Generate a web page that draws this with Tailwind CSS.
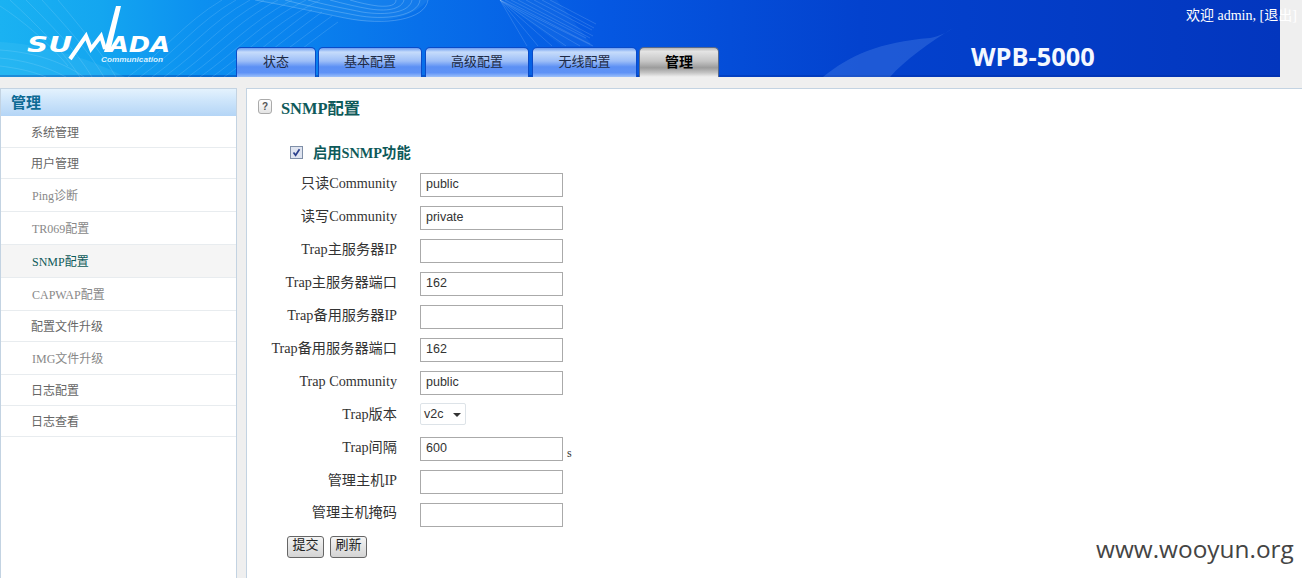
<!DOCTYPE html>
<html lang="zh">
<head>
<meta charset="utf-8">
<title>SNMP配置</title>
<script src="https://cdn.jsdelivr.net/npm/@tailwindcss/browser@4"></script>
</head>
<body class="m-0 bg-[#efefef] font-['Liberation_Serif','Noto_Sans_CJK_SC',serif] text-[14px] text-[#333]">
<div class="relative h-[578px] w-[1302px] overflow-hidden">

  <header class="relative h-[77px] w-[1280px] bg-[linear-gradient(90deg,#1ab2f2_0px,#14a6f0_100px,#0c90f0_200px,#0a82ee_300px,#0870ea_420px,#0558e2_600px,#0342ce_860px,#0336be_1280px)]">
    <svg class="absolute inset-0" width="1280" height="77" viewBox="0 0 1280 77" fill="none">
      <rect x="0" y="75" width="1280" height="2" fill="#022a9a" fill-opacity=".35"/>
      <path d="M255 0C295 6 320 12 345 18C370 24 410 22 428 0Z" fill="#6cc4fa" fill-opacity=".12"/>
      <path d="M823 77C850 55 880 42 930 38C940 36 948 32 953 28C930 42 905 60 890 77Z" fill="#6b9ef0" fill-opacity=".26"/>
      <path d="M0 42C40 44 90 58 125 77L0 77Z" fill="#6ed2fa" fill-opacity=".14"/>
      <path d="M500 0H557L593 46H562Z" fill="#7cc0fa" fill-opacity=".07"/>
      <g stroke="#bfe6ff" stroke-opacity=".17" stroke-width="1">
        <path d="M128 77C165 50 185 22 222 0"/><path d="M140 77C178 50 197 22 236 0"/><path d="M152 77C190 50 210 22 250 0"/>
        <path d="M164 77C202 50 223 22 264 0"/><path d="M176 77C214 50 236 22 278 0"/><path d="M188 77C226 50 250 22 292 0"/>
        <path d="M200 77C238 50 262 22 306 0"/><path d="M212 77C250 50 276 22 320 0"/><path d="M224 77C262 50 290 24 312 10"/>
        <path d="M236 77C272 50 300 28 322 12"/><path d="M250 77C284 52 312 30 332 16"/><path d="M264 77C296 54 318 36 338 22"/>
        <path d="M116 77C100 50 78 24 58 0"/><path d="M104 77C88 50 64 24 42 0"/><path d="M92 77C76 50 50 24 26 0"/>
        <path d="M80 77C64 52 38 26 10 0"/><path d="M68 66C50 44 22 20 0 6"/>
        <path d="M0 50C30 52 60 60 84 77"/><path d="M0 58C22 60 46 66 66 77"/><path d="M0 66C16 68 32 71 46 77"/>
      </g>
      <g stroke="#cfeaff" stroke-opacity=".17">
        <path d="M500 0L593 46"/><path d="M505 0L590 44"/><path d="M511 0L586 38"/><path d="M518 0L590 38"/><path d="M526 0L593 36"/>
        <path d="M534 0L592 30"/><path d="M542 0L594 28"/><path d="M550 0L596 24"/><path d="M500 0L527 46"/><path d="M500 0L538 46"/><path d="M500 0L552 46"/><path d="M500 0L566 46"/><path d="M500 0L580 46"/>
      </g>
      <g stroke="#cfeaff" stroke-opacity=".26">
        <path d="M255 0C300 8 325 14 345 18C385 26 425 20 428 0"/><path d="M285 0C315 8 340 12 355 15C385 21 418 16 420 0"/>
        <path d="M308 0C330 6 348 9 362 12C388 16 410 12 412 0"/><path d="M330 0C345 4 358 7 370 9C390 12 402 8 404 0"/>
        <path d="M350 0C360 3 370 5 378 6C390 7 396 5 396 0"/>
      </g>
    </svg>

    <svg class="absolute left-0 top-0" width="200" height="77" viewBox="0 0 200 77" fill="none">
      <path d="M70 59L86 36L91 49L101 36L105 49" stroke="#fff" stroke-width="4"/>
      <polygon points="116,6 121,6 110,52 104,52" fill="#fff"/>
      <text x="27" y="51.5" textLength="45" lengthAdjust="spacingAndGlyphs" fill="#fff" font-family="'DejaVu Sans',sans-serif" font-weight="700" font-style="italic" font-size="21">SU</text>
      <text x="109" y="51.5" textLength="61" lengthAdjust="spacingAndGlyphs" fill="#fff" font-family="'DejaVu Sans',sans-serif" font-weight="700" font-style="italic" font-size="21">ADA</text>
      <text x="101" y="62" textLength="62" lengthAdjust="spacingAndGlyphs" fill="#d7f0ff" font-family="'Liberation Sans',sans-serif" font-weight="700" font-style="italic" font-size="7">Communication</text>
    </svg>

    <nav class="absolute bottom-0 left-[236px] flex h-[30px] items-stretch">
      <a class="flex w-[80px] items-center justify-center rounded-t-[5px] border-x border-t border-[#0a4bc8] bg-[linear-gradient(180deg,#6d9cf0_0%,#c6dcfb_14%,#9dbef7_45%,#5c90f4_65%,#5f92f6_85%,#9cc0fa_100%)] pb-px text-[13px] text-[#1d2a44]">状态</a>
      <a class="ml-[2px] flex w-[104px] items-center justify-center rounded-t-[5px] border-x border-t border-[#0a4bc8] bg-[linear-gradient(180deg,#6d9cf0_0%,#c6dcfb_14%,#9dbef7_45%,#5c90f4_65%,#5f92f6_85%,#9cc0fa_100%)] pb-px text-[13px] text-[#1d2a44]">基本配置</a>
      <a class="ml-[3px] flex w-[104px] items-center justify-center rounded-t-[5px] border-x border-t border-[#0a4bc8] bg-[linear-gradient(180deg,#6d9cf0_0%,#c6dcfb_14%,#9dbef7_45%,#5c90f4_65%,#5f92f6_85%,#9cc0fa_100%)] pb-px text-[13px] text-[#1d2a44]">高级配置</a>
      <a class="ml-[3px] flex w-[105px] items-center justify-center rounded-t-[5px] border-x border-t border-[#0a4bc8] bg-[linear-gradient(180deg,#6d9cf0_0%,#c6dcfb_14%,#9dbef7_45%,#5c90f4_65%,#5f92f6_85%,#9cc0fa_100%)] pb-px text-[13px] text-[#1d2a44]">无线配置</a>
      <a class="ml-[2px] flex w-[80px] items-center justify-center rounded-t-[5px] border-x border-t border-[#5a6a88] bg-[linear-gradient(180deg,#b8b8b8_0%,#e4e4e4_12%,#c6c6c6_45%,#9c9c9c_68%,#c4c4c4_85%,#f0f0f0_100%)] pb-px text-[14px] font-bold text-black">管理</a>
    </nav>

    <div class="absolute left-[971px] top-[41px] font-['Open_Sans','Noto_Sans',sans-serif] text-[25.4px] leading-[30px] font-bold text-[#f4f8ff]">WPB-5000</div>
    <div class="absolute left-[1186px] top-[7px] whitespace-nowrap text-[14px] leading-[18px] text-white">欢迎 admin, [退出]</div>
  </header>

  <div class="flex h-[501px] pt-[11px]">
    <aside class="h-full w-[237px] shrink-0 border-x border-t border-[#c3d3e2] bg-white text-[12px] text-[#666]">
      <h2 class="h-[27px] bg-[linear-gradient(180deg,#e4f2fd_0%,#cfe6fb_40%,#b4d5f6_100%)] pl-[10px] text-[15px] leading-[28px] font-bold text-[#0c6a94]">管理</h2>
      <ul class="m-0 list-none p-0">
        <li class="flex h-[32px] items-center border-b border-[#e8ecef] pl-[30px] pt-[2px]">系统管理</li>
        <li class="flex h-[31px] items-center border-b border-[#e8ecef] pl-[30px] pt-[2px]">用户管理</li>
        <li class="flex h-[33px] items-center border-b border-[#e8ecef] pl-[31px] pt-[2px] text-[#888]">Ping诊断</li>
        <li class="flex h-[33px] items-center border-b border-[#e8ecef] pl-[31px] pt-[2px] text-[#888]">TR069配置</li>
        <li class="flex h-[33px] items-center border-b border-[#e8ecef] bg-[#f5f5f5] pl-[31px] pt-[2px] text-[#0e5a5a]">SNMP配置</li>
        <li class="flex h-[33px] items-center border-b border-[#e8ecef] pl-[31px] pt-[2px] text-[#888]">CAPWAP配置</li>
        <li class="flex h-[31px] items-center border-b border-[#e8ecef] pl-[30px] pt-[2px]">配置文件升级</li>
        <li class="flex h-[33px] items-center border-b border-[#e8ecef] pl-[31px] pt-[2px] text-[#888]">IMG文件升级</li>
        <li class="flex h-[31px] items-center border-b border-[#e8ecef] pl-[30px] pt-[2px]">日志配置</li>
        <li class="flex h-[31px] items-center border-b border-[#e8ecef] pl-[30px] pt-[2px]">日志查看</li>
      </ul>
    </aside>

    <main class="ml-[9px] h-full grow border-l border-t border-[#c3d3e2] bg-white">
      <div class="flex h-[39px] items-start pl-[11px] pt-[10px]">
        <span class="flex h-[15px] w-[14px] items-center justify-center rounded-[3px] border border-[#aaa] bg-[linear-gradient(180deg,#fff,#e4e4e4)] font-['Liberation_Sans',sans-serif] text-[10px] leading-none font-bold text-[#555]">?</span>
        <h1 class="ml-[9px] text-[16.4px] leading-[20px] font-bold text-[#0e5a5a]">SNMP配置</h1>
      </div>

      <form class="block">
        <div class="flex h-[45px] items-start pl-[43px] pt-[18px]">
          <span class="flex h-[13px] w-[13px] items-center justify-center border border-[#7f8fa8] bg-[#dfe4f0]">
            <svg width="11" height="11" viewBox="0 0 11 11" fill="none"><path d="M2.5 5.5L4.6 8.3L8.5 2.2" stroke="#2a3f8c" stroke-width="1.7"/></svg>
          </span>
          <label class="ml-[10px] -mt-[2px] text-[14.3px] leading-[18px] font-bold text-[#0e5a5a]">启用SNMP功能</label>
        </div>

        <div class="flex h-[33px] items-start"><label class="w-[150px] -mt-px text-right text-[14.2px] leading-[22px]">只读Community</label><input value="public" class="ml-[23px] h-[24px] w-[143px] border border-[#aaa] px-[5px] pb-[2px] font-['Liberation_Sans',sans-serif] text-[12.5px] text-[#333]"></div>
        <div class="flex h-[33px] items-start"><label class="w-[150px] -mt-px text-right text-[14.2px] leading-[22px]">读写Community</label><input value="private" class="ml-[23px] h-[24px] w-[143px] border border-[#aaa] px-[5px] pb-[2px] font-['Liberation_Sans',sans-serif] text-[12.5px] text-[#333]"></div>
        <div class="flex h-[33px] items-start"><label class="w-[150px] -mt-px text-right text-[14.2px] leading-[22px]">Trap主服务器IP</label><input value="" class="ml-[23px] h-[24px] w-[143px] border border-[#aaa] px-[5px] pb-[2px] font-['Liberation_Sans',sans-serif] text-[12.5px] text-[#333]"></div>
        <div class="flex h-[33px] items-start"><label class="w-[150px] -mt-px text-right text-[14.2px] leading-[22px]">Trap主服务器端口</label><input value="162" class="ml-[23px] h-[24px] w-[143px] border border-[#aaa] px-[5px] pb-[2px] font-['Liberation_Sans',sans-serif] text-[12.5px] text-[#333]"></div>
        <div class="flex h-[33px] items-start"><label class="w-[150px] -mt-px text-right text-[14.2px] leading-[22px]">Trap备用服务器IP</label><input value="" class="ml-[23px] h-[24px] w-[143px] border border-[#aaa] px-[5px] pb-[2px] font-['Liberation_Sans',sans-serif] text-[12.5px] text-[#333]"></div>
        <div class="flex h-[33px] items-start"><label class="w-[150px] -mt-px text-right text-[14.2px] leading-[22px]">Trap备用服务器端口</label><input value="162" class="ml-[23px] h-[24px] w-[143px] border border-[#aaa] px-[5px] pb-[2px] font-['Liberation_Sans',sans-serif] text-[12.5px] text-[#333]"></div>
        <div class="flex h-[33px] items-start"><label class="w-[150px] -mt-px text-right text-[14.2px] leading-[22px]">Trap Community</label><input value="public" class="ml-[23px] h-[24px] w-[143px] border border-[#aaa] px-[5px] pb-[2px] font-['Liberation_Sans',sans-serif] text-[12.5px] text-[#333]"></div>
        <div class="flex h-[33px] items-start"><label class="w-[150px] -mt-px text-right text-[14.2px] leading-[22px]">Trap版本</label>
          <div class="ml-[23px] -mt-px flex h-[22px] w-[46px] items-center justify-between rounded-[2px] border border-[#dde3e8] pl-[3px] pr-[4px] pt-px font-['Liberation_Sans',sans-serif] text-[12.5px] text-[#333]">v2c<svg width="8" height="4" viewBox="0 0 8 4"><path d="M0 0H8L4 4Z" fill="#333"/></svg></div>
        </div>
        <div class="flex h-[33px] items-start"><label class="w-[150px] -mt-px text-right text-[14.2px] leading-[22px]">Trap间隔</label><input value="600" class="ml-[23px] h-[24px] w-[143px] border border-[#aaa] px-[5px] pb-[2px] font-['Liberation_Sans',sans-serif] text-[12.5px] text-[#333]"><span class="ml-[4px] mt-[9px] text-[12px] leading-[14px]">s</span></div>
        <div class="flex h-[33px] items-start"><label class="w-[150px] -mt-px text-right text-[14.2px] leading-[22px]">管理主机IP</label><input value="" class="ml-[23px] h-[24px] w-[143px] border border-[#aaa] px-[5px] pb-[2px] font-['Liberation_Sans',sans-serif] text-[12.5px] text-[#333]"></div>
        <div class="flex h-[33px] items-start"><label class="w-[150px] -mt-px text-right text-[14.2px] leading-[20px]">管理主机掩码</label><input value="" class="ml-[23px] h-[24px] w-[143px] border border-[#aaa] px-[5px] pb-[2px] font-['Liberation_Sans',sans-serif] text-[12.5px] text-[#333]"></div>

        <div class="flex gap-[6px] pl-[40px]">
          <button type="button" class="h-[22px] w-[37px] rounded-[3px] border border-[#666] bg-[linear-gradient(180deg,#f4f4f4,#d4d4d4)] pb-[5px] text-[13px] leading-none text-[#222]">提交</button>
          <button type="button" class="h-[22px] w-[37px] rounded-[3px] border border-[#666] bg-[linear-gradient(180deg,#f4f4f4,#d4d4d4)] pb-[5px] text-[13px] leading-none text-[#222]">刷新</button>
        </div>
      </form>
    </main>
  </div>

  <div class="absolute left-[1096px] top-[533px] font-['Open_Sans','Noto_Sans',sans-serif] text-[24.4px] leading-[32px] text-[#444]">www.wooyun.org</div>
</div>
</body>
</html>
